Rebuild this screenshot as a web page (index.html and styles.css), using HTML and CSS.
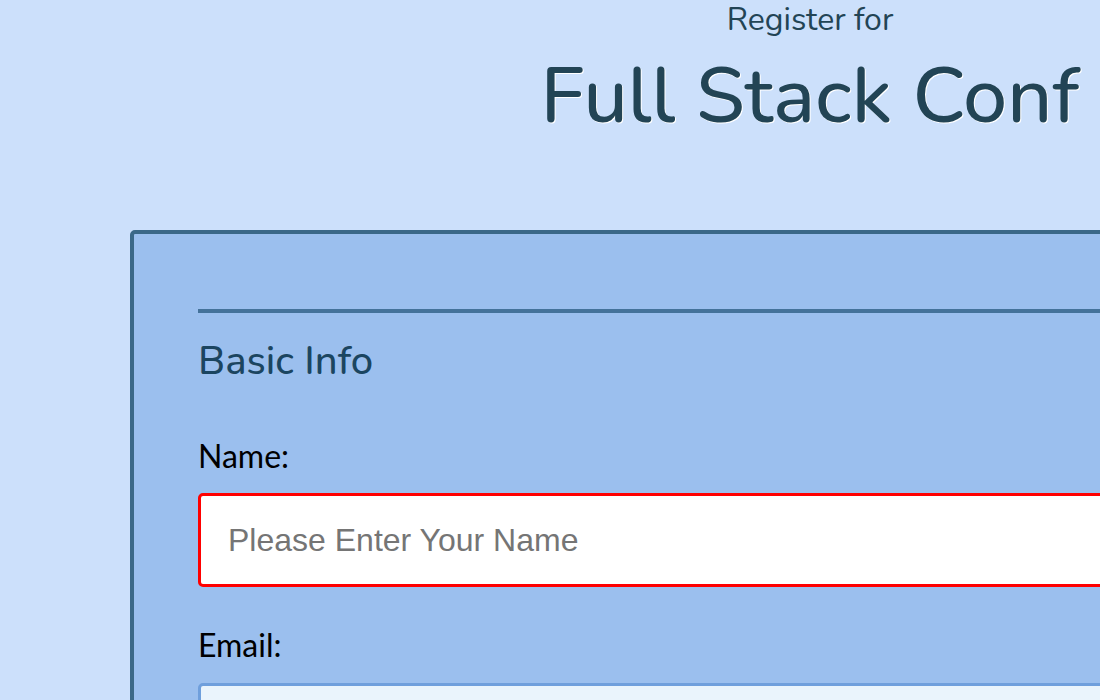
FILE: index.html
```html
<!DOCTYPE html>
<html>
<head>
<meta charset="utf-8">
<link rel="stylesheet" href="styles.css">
</head>
<body>
<div class="page">
  <header class="hero">
    <p class="pre">Register for</p>
    <h1 class="title">Full Stack Conf</h1>
  </header>
  <form class="card">
    <fieldset class="section">
      <hr class="rule">
      <h2 class="legend">Basic Info</h2>
      <label class="label label-name" for="name">Name:</label>
      <input class="field field-error" id="name" type="text" placeholder="Please Enter Your Name">
      <label class="label label-email" for="email">Email:</label>
      <input class="field field-focus" id="email" type="email">
    </fieldset>
  </form>
</div>
</body>
</html>
```

FILE: styles.css
```css
html, body {
  margin: 0;
  padding: 0;
  background: #cce0fb;
  overflow: hidden;
}
.page {
  width: 1620px;
  font-family: "Nunito", "Lato", "Open Sans", sans-serif;
}
.hero {
  text-align: center;
  color: #224455;
}
.pre {
  margin: 0;
  padding-top: 2px;
  font-size: 32px;
  line-height: 36px;
}
.title {
  margin: 9px 0 0;
  font-size: 79px;
  font-weight: 500;
  line-height: 98px;
  text-shadow: 1px 1px 0 #fff;
}
.card {
  margin: 85px 0 0 130px;
  width: 1358px;
  background: #9bbfee;
  border: 4px solid #3b6888;
  border-radius: 5px;
  padding: 75px 64px 40px;
  box-sizing: border-box;
}
.section {
  border: 0;
  margin: 0;
  padding: 0;
  display: flex;
  flex-direction: column;
}
.rule {
  margin: 0;
  border: 0;
  height: 4px;
  background: #44729a;
}
.legend {
  margin: 23px 0 0;
  font-size: 40px;
  font-weight: 500;
  line-height: 50px;
  color: #1b4560;
}
.label {
  font-family: "Lato", "Nunito", sans-serif;
  font-size: 32px;
  line-height: 36px;
  color: #000;
}
.label-name {
  margin-top: 52px;
}
.label-email {
  margin-top: 40px;
}
.field {
  height: 94px;
  box-sizing: border-box;
  border-radius: 5px;
  padding: 0 27px;
  font-family: "Liberation Sans", Arial, sans-serif;
  font-size: 32px;
  background: #fff;
  outline: none;
}
.field::placeholder {
  color: #757575;
}
.field-error {
  margin-top: 19px;
  border: 3px solid #ff0000;
}
.field-focus {
  margin-top: 20px;
  border: 3px solid #6f9fdc;
  background: #eaf4fc;
}
```
